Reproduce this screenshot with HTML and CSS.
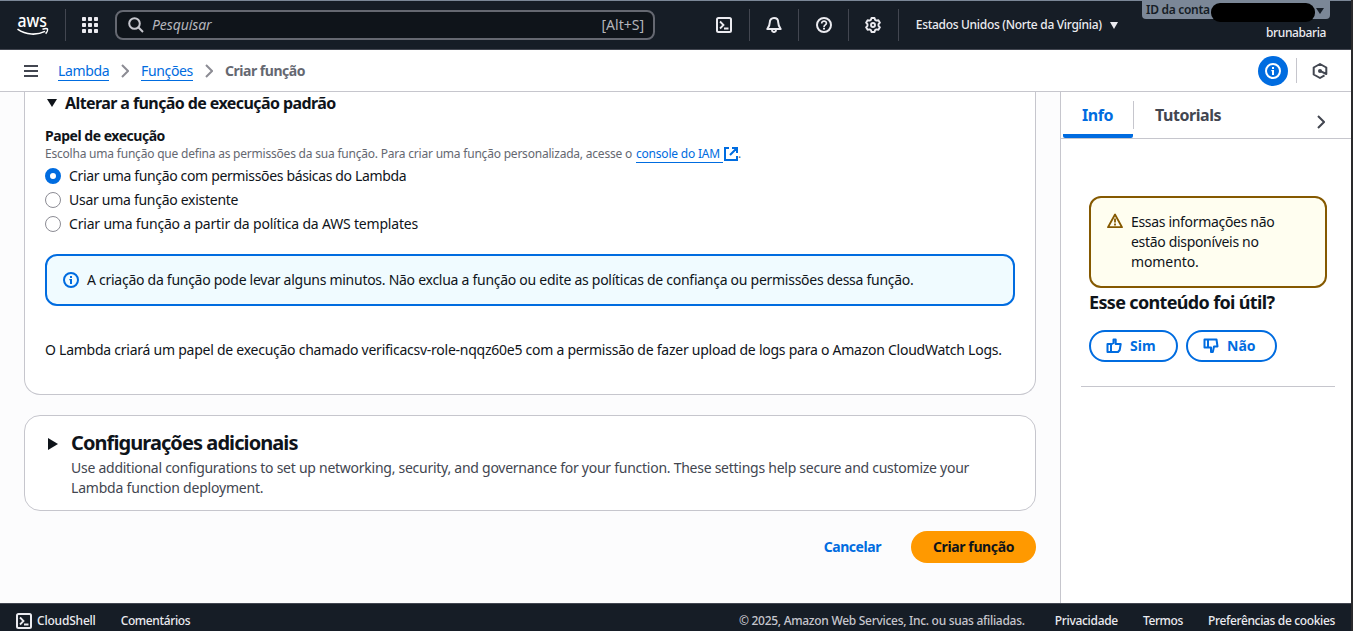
FILE: index.html
```html
<!DOCTYPE html>
<html lang="pt-BR">
<head>
<meta charset="utf-8">
<title>Criar função | Lambda</title>
<link rel="stylesheet" href="styles.css">
</head>
<body>
<div class="app">
  <header class="topnav">
    <svg class="aws-logo" viewBox="-2 -6 36 34" width="36" height="34"><text class="aws-word" x="0.5" y="12.500" textLength="29.500" lengthAdjust="spacingAndGlyphs">aws</text><path d="M.5 15.200c8.500 6 19.500 6.200 27.500 2.200M25.500 15.200c2-.6 4.500-.8 4.900-.2.500.8-.4 3.200-1.800 4.600" fill="none" stroke="#fff" stroke-width="1.600"/></svg>
    <span class="nav-line first-line"></span>
    <svg class="grid-icon" viewBox="0 0 16 16" width="16" height="16" fill="#ebebf0"><rect width="4" height="4" rx=".8"/><rect x="6" width="4" height="4" rx=".8"/><rect x="12" width="4" height="4" rx=".8"/><rect y="6" width="4" height="4" rx=".8"/><rect x="6" y="6" width="4" height="4" rx=".8"/><rect x="12" y="6" width="4" height="4" rx=".8"/><rect y="12" width="4" height="4" rx=".8"/><rect x="6" y="12" width="4" height="4" rx=".8"/><rect x="12" y="12" width="4" height="4" rx=".8"/></svg>
    <div class="search">
      <svg viewBox="0 0 16 16" width="16" height="16" fill="none" stroke="#c6c6cd" stroke-width="2"><circle cx="6.500" cy="6.500" r="5.300"/><path d="M10.300 10.300 15 15"/></svg>
      <span class="placeholder">Pesquisar</span><span class="shortcut">[Alt+S]</span>
    </div>
    <div class="nav-icons">
      <span class="nav-cell"><svg viewBox="0 0 16 16" width="16" height="16" fill="none" stroke="#ebebf0" stroke-width="2"><rect x="1" y="1" width="14" height="14" rx="1.500"/><path d="M4 4.500 7.500 8 4 11.500M8 11.500h4.500" stroke-width="1.800"/></svg></span>
      <span class="nav-cell"><svg viewBox="0 0 16 16" width="16" height="16" fill="none" stroke="#ebebf0" stroke-width="2" stroke-linejoin="round"><path d="M8 1C5.300 1 3.800 2.900 3.800 5.200 3.800 8.500 2.800 10 1.300 12h13.400c-1.500-2-2.500-3.500-2.500-6.800C12.200 2.900 10.700 1 8 1Z"/><path d="M6 13c0 2.700 4 2.700 4 0"/></svg></span>
      <span class="nav-cell"><svg viewBox="0 0 16 16" width="16" height="16" fill="none" stroke="#ebebf0" stroke-width="2"><circle cx="8" cy="8" r="7"/><path d="M5.700 6.400C5.700 3.300 10.500 3.500 10.400 6.300 10.300 8.100 8 7.700 8 10" stroke-width="1.700"/><path d="M8 10.700v1.800"/></svg></span>
      <span class="nav-cell"><svg viewBox="0 0 16 16" width="16" height="16" fill="none" stroke="#ebebf0" stroke-width="1.900" stroke-linejoin="round"><path d="M6.500 1h3l.6 1.900 1.300.7 2-.4 1.500 2.500L13.500 7.200v1.600l1.400 1.500-1.500 2.500-2-.4-1.300.7-.6 1.900h-3l-.6-1.900-1.300-.7-2 .4-1.500-2.500 1.400-1.500V7.200L1.100 5.700l1.500-2.500 2 .4 1.300-.7Z"/><circle cx="8" cy="8" r="2"/></svg></span>
    </div>
    <div class="region">Estados Unidos (Norte da Virgínia)</div>
    <svg class="region-caret" viewBox="0 0 8 7" width="8" height="7"><path d="M0 0h8L4 7Z" fill="#ebebf0"/></svg>
    <div class="account">
      <div class="account-tag"><span class="account-label">ID da conta</span><span class="redaction"></span><svg viewBox="0 0 8 6" width="8" height="6"><path d="M0 0h8L4 6Z" fill="#161d26"/></svg></div>
      <span class="user">brunabaria</span>
    </div>
  </header>

  <nav class="crumbs">
    <svg class="menu-icon" viewBox="0 0 14 12" width="14" height="12" stroke="#424650" stroke-width="2"><path d="M0 1h14M0 6h14M0 11h14"/></svg>
    <a class="crumb c-lambda">Lambda</a>
    <svg class="chev" viewBox="0 0 8 14" width="8" height="14" fill="none" stroke="#8c8c94" stroke-width="2"><path d="m1 1 6 6-6 6"/></svg>
    <a class="crumb c-func">Funções</a>
    <svg class="chev" viewBox="0 0 8 14" width="8" height="14" fill="none" stroke="#8c8c94" stroke-width="2"><path d="m1 1 6 6-6 6"/></svg>
    <span class="current">Criar função</span>
    <span class="info-toggle"><svg viewBox="0 0 16 16" width="16" height="16"><circle cx="8" cy="8" r="7" fill="none" stroke="#fff" stroke-width="2"/><path d="M7 4h2v2H7zM6.300 7H9v5H7V8.300h-.7z" fill="#fff"/></svg></span>
    <span class="tool-line"></span>
    <svg class="hex" viewBox="0 0 16 16" width="16" height="16" fill="none" stroke="#424650" stroke-width="2" stroke-linejoin="round"><path d="M12.500 12.400 8 15l-6.300-3.500v-7L8 1l6.300 3.500V11L8.500 8.200"/><circle cx="8" cy="8" r="2" fill="#424650" stroke="none"/></svg>
  </nav>

  <div class="body">
    <main class="content">
      <section class="card card-role">
        <h3 class="expand"><svg viewBox="0 0 10 8" width="10" height="8"><path d="M0 0h10L5 8Z" fill="#0f141a"/></svg><span class="t-expand">Alterar a função de execução padrão</span></h3>
        <div class="field-label"><span>Papel de execução</span></div>
        <div class="hint"><span class="t-hint">Escolha uma função que defina as permissões da sua função. Para criar uma função personalizada, acesse o</span><a class="hint-link">console do IAM</a><svg viewBox="0 0 14 14" width="14" height="14" fill="none" stroke="#006ce0" stroke-width="2"><path d="M5 1H1v12h12V9M8 1h5v5M13 1 6 8"/></svg>.</div>
        <div class="radio"><i class="dot on"></i><span class="r1">Criar uma função com permissões básicas do Lambda</span></div>
        <div class="radio"><i class="dot"></i><span class="r2">Usar uma função existente</span></div>
        <div class="radio"><i class="dot"></i><span class="r3">Criar uma função a partir da política da AWS templates</span></div>
        <div class="notice"><svg viewBox="0 0 16 16" width="16" height="16"><circle cx="8" cy="8" r="7" fill="none" stroke="#006ce0" stroke-width="2"/><path d="M7 4h2v2H7zM6.300 7H9v5H7V8.300h-.7z" fill="#006ce0"/></svg><span class="t-notice">A criação da função pode levar alguns minutos. Não exclua a função ou edite as políticas de confiança ou permissões dessa função.</span></div>
        <p class="role-text"><span>O Lambda criará um papel de execução chamado verificacsv-role-nqqz60e5 com a permissão de fazer upload de logs para o Amazon CloudWatch Logs.</span></p>
      </section>
      <section class="card card-extra">
        <svg class="side-caret" viewBox="0 0 10 12" width="10" height="12"><path d="M0 0v12l10-6Z" fill="#0f141a"/></svg>
        <div>
          <h2 class="extra-title"><span>Configurações adicionais</span></h2>
          <p class="extra-desc"><span class="d1">Use additional configurations to set up networking, security, and governance for your function. These settings help secure and customize your</span><br><span class="d2">Lambda function deployment.</span></p>
        </div>
      </section>
      <div class="actions"><a class="cancel">Cancelar</a><button class="create"><span>Criar função</span></button></div>
    </main>
    <aside class="panel">
      <div class="tabs"><span class="tab active"><span>Info</span></span><span class="tab-line"></span><span class="tab"><span class="t-tut">Tutorials</span></span><svg viewBox="0 0 8 14" width="8" height="14" fill="none" stroke="#424650" stroke-width="2"><path d="m1 1 6 6-6 6"/></svg></div>
      <div class="warn"><svg viewBox="0 0 16 16" width="16" height="16" fill="none" stroke="#855900" stroke-width="1.800" stroke-linejoin="round"><path d="M8 1.500 1 14.200h14Z"/><path d="M8 5.500v4M8 10.500v2"/></svg><div><span class="w1">Essas informações não</span><br><span class="w2">estão disponíveis no</span><br><span class="w3">momento.</span></div></div>
      <h3 class="useful"><span>Esse conteúdo foi útil?</span></h3>
      <div class="votes">
        <button class="vote yes"><svg viewBox="0 0 16 16" width="16" height="16" fill="none" stroke="#006ce0" stroke-width="2" stroke-linejoin="round"><path d="M1.500 6H5v8H1.500ZM5 6.500 7.500 5V1.500h2.200V6h5l-1 6-1.700 2H5"/></svg><span>Sim</span></button>
        <button class="vote no"><svg viewBox="0 0 16 16" width="16" height="16" fill="none" stroke="#006ce0" stroke-width="2" stroke-linejoin="round"><path d="M1.500 1.500H5v8H1.500ZM5 1.500h8.500l1 7H11L9.800 14H8V9.500H5"/></svg><span>Não</span></button>
      </div>
      <hr class="panel-rule">
    </aside>
  </div>

  <footer class="footer">
    <svg viewBox="0 0 16 16" width="16" height="16" fill="none" stroke="#ebebf0" stroke-width="2"><rect x="1" y="1" width="14" height="14" rx="1.500"/><path d="M4 4.500 7.500 8 4 11.500M8 11.500h4.500" stroke-width="1.800"/></svg>
    <span class="f-shell">CloudShell</span><span class="f-com">Comentários</span>
    <span class="f-copy">© 2025, Amazon Web Services, Inc. ou suas afiliadas.</span>
    <span class="f-priv">Privacidade</span><span class="f-term">Termos</span><span class="f-cook">Preferências de cookies</span>
  </footer>
</div>
</body>
</html>
```
FILE: styles.css
```css
* { box-sizing: border-box; }
body { margin: 0; background: #2a2a2c; font-family: "Noto Sans", "Open Sans", sans-serif; font-size: 14px; line-height: 20px; color: #0f141a; }
svg { flex: none; display: block; }
span, a { white-space: nowrap; }
h2, h3, p { margin: 0; }
button { font: inherit; padding: 0; }
.app { width: 1351px; height: 631px; display: flex; flex-direction: column; overflow: hidden; }

.topnav { height: 50px; flex: none; background: #161d26; border-top: 1px solid #7b8797; border-bottom: 1px solid #424650; display: flex; align-items: center; color: #ebebf0; }
.aws-logo { margin-left: 15px; }
.aws-word { font: 500 18px "Noto Sans", sans-serif; fill: #fff; }
.nav-line { width: 1px; height: 32px; background: #424650; margin-left: 14px; }
.grid-icon { margin-left: 16px; }
.search { margin-left: 17px; width: 540px; height: 30px; border: 2px solid #656871; border-radius: 8px; background: #0f141a; display: flex; align-items: center; padding: 0 9px 0 11px; color: #b4b4bb; }
.placeholder { font-style: italic; margin-left: 8px; letter-spacing: -.1px; }
.shortcut { margin-left: auto; }
.nav-icons { display: flex; margin-left: 45px; height: 32px; }
.nav-cell { width: 49.700px; border-right: 1px solid #424650; display: flex; align-items: center; justify-content: center; }
.region { width: 190px; margin-left: 17px; font-size: 12px; font-weight: 500; white-space: nowrap; letter-spacing: -.3px; }
.region-caret { margin-left: 4px; }
.account { margin-left: auto; width: 188px; height: 48px; margin-right: 21px; display: flex; flex-direction: column; align-items: flex-end; }
.account-tag { width: 188px; height: 18px; background: #7b8797; border-radius: 0 0 4px 4px; display: flex; align-items: center; color: #161d26; font-size: 12px; font-weight: 600; padding-left: 4px; }
.account-label { width: 65px; letter-spacing: -.3px; }
.redaction { width: 104px; height: 19px; border-radius: 9px; background: #000; margin-top: 4px; }
.account-tag svg { margin-left: 1px; margin-top: 2px; }
.user { font-size: 12px; font-weight: 500; margin: 4px 4px 0 0; letter-spacing: -.4px; }

.crumbs { height: 42px; flex: none; background: #fff; border-bottom: 1px solid #c6c6cd; display: flex; align-items: center; padding-left: 24px; }
.crumb { color: #006ce0; border-bottom: 1px solid #006ce0; line-height: 18px; margin-top: 1px; letter-spacing: -.35px; }
.c-lambda { margin-left: 20px; width: 51px; }
.c-func { width: 52px; }
.chev { margin: 0 12px; }
.current { color: #656871; font-weight: 700; letter-spacing: -.48px; }
.info-toggle { margin-left: auto; width: 30px; height: 30px; border-radius: 50%; background: #006ce0; display: flex; align-items: center; justify-content: center; }
.tool-line { width: 1px; height: 25px; background: #c6c6cd; margin: 0 15px 0 8px; }
.hex { margin-right: 23px; }

.body { height: 511px; flex: none; display: flex; }
.content { width: 1060px; background: #fcfcfd; padding: 0 24px; }
.card { background: #fff; border: 1px solid #c6c6cd; border-radius: 16px; }
.card-role { height: 303px; border-top: 0; border-radius: 0 0 16px 16px; padding: 1px 20px 0; }
.expand { display: flex; align-items: center; gap: 8px; padding-left: 2px; font-size: 16px; line-height: 20px; font-weight: 700; letter-spacing: -.59px; }
.field-label { font-weight: 700; margin-top: 13px; line-height: 20px; letter-spacing: -.47px; }
.hint { display: flex; align-items: center; height: 16px; font-size: 12px; line-height: 16px; color: #656871; letter-spacing: -.21px; }
.hint-link { color: #006ce0; border-bottom: 1px solid #006ce0; width: 87px; margin: 0 1px 0 4px; }
.radio { display: flex; align-items: center; height: 20px; margin-bottom: 4px; }
.hint + .radio { margin-top: 4px; }
.r1 { letter-spacing: -.35px; }
.r2 { letter-spacing: -.28px; }
.r3 { letter-spacing: -.19px; }
.dot { width: 16px; height: 16px; border: 1px solid #8c8c94; border-radius: 50%; margin-right: 8px; flex: none; }
.dot.on { border: 5px solid #006ce0; }
.notice { height: 52px; margin-top: 20px; border: 2px solid #006ce0; border-radius: 12px; background: #f0fbff; display: flex; align-items: center; gap: 8px; padding-left: 16px; letter-spacing: -.27px; }
.role-text { margin-top: 34px; letter-spacing: -.25px; }
.card-extra { height: 96px; margin-top: 20px; display: flex; padding: 15px 23px; }
.side-caret { margin: 7px 13px 0 0; }
.extra-title { font-size: 20px; line-height: 24px; font-weight: 700; letter-spacing: -.92px; }
.extra-desc { color: #424650; margin-top: 3px; letter-spacing: -.26px; }
.d2 { letter-spacing: -.2px; }
.actions { display: flex; justify-content: flex-end; align-items: center; margin-top: 20px; font-weight: 700; }
.cancel { color: #006ce0; margin-right: 30px; letter-spacing: -.45px; }
.create { width: 125px; height: 32px; border: 0; border-radius: 16px; background: #ff9900; color: #0f141a; font-weight: 700; letter-spacing: -.38px; }

.panel { width: 291px; background: #fff; border-left: 1px solid #c6c6cd; }
.tabs { height: 47px; border-bottom: 1px solid #c6c6cd; display: flex; align-items: flex-start; font-size: 16px; font-weight: 700; color: #424650; letter-spacing: -.45px; }
.tab { padding: 13px 20px 0 21px; }
.tab.active { width: 70px; height: 46px; margin-left: 2px; padding: 13px 0 0 19px; color: #006ce0; border-bottom: 4px solid #006ce0; border-radius: 2px; }
.tab-line { width: 1px; height: 28px; margin-top: 9px; background: #c6c6cd; }
.tabs svg { margin: 23px 26px 0 auto; }
.warn { margin: 57px 24px 0 28px; height: 92px; border: 2px solid #855900; border-radius: 12px; background: #fffef0; display: flex; gap: 8px; padding: 14px 16px; letter-spacing: -.32px; }
.warn svg { margin-top: 1px; }
.w3 { letter-spacing: -.1px; }
.useful { margin: 4px 0 0 28px; font-size: 18px; line-height: 20px; font-weight: 700; letter-spacing: -.66px; }
.votes { display: flex; gap: 8px; margin: 18px 0 0 28px; }
.vote { height: 32px; border: 2px solid #006ce0; border-radius: 16px; background: #fff; color: #006ce0; font-weight: 700; display: flex; align-items: center; gap: 8px; padding-left: 15px; }
.yes { width: 89px; }
.no { width: 91px; }
.panel-rule { border: 0; height: 1px; background: #c6c6cd; margin: 24px 16px 0 20px; }

.footer { height: 28px; flex: none; background: #161d26; border-top: 1px solid #424650; display: flex; padding: 7px 16px 0; font-size: 12px; font-weight: 500; color: #ebebf0; }
.footer svg { margin-top: 2px; }
.f-shell { margin-left: 5px; letter-spacing: -.2px; }
.f-com { margin-left: 25px; letter-spacing: -.38px; }
.f-copy { margin-left: auto; margin-right: 30px; color: #c6c6cd; letter-spacing: -.29px; }
.f-priv { letter-spacing: -.3px; }
.f-term { margin: 0 25px; letter-spacing: -.4px; }
.f-cook { letter-spacing: -.35px; }
```
